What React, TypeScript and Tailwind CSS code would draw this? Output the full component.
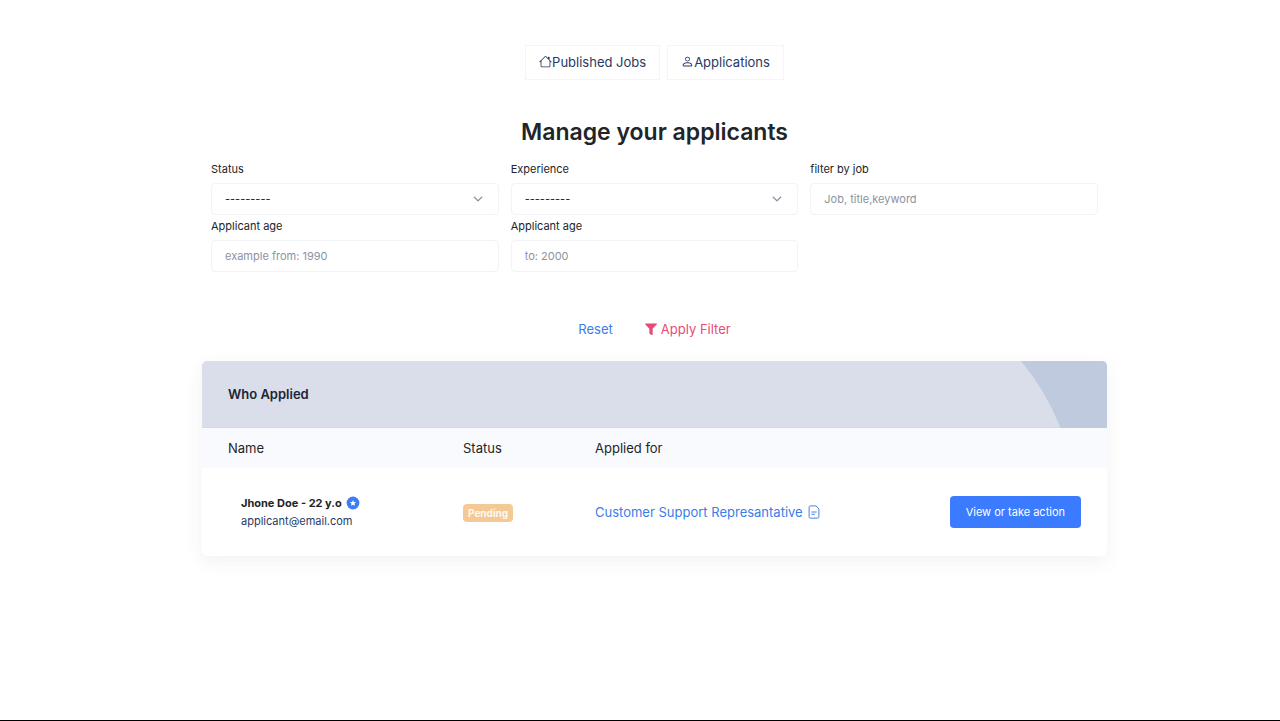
import React from "react";
import { BsHouse, BsPerson, BsChevronDown } from "react-icons/bs";

const control =
  "block h-8 w-full appearance-none rounded-[4px] border border-[#f2f3f5] bg-white px-[13px] text-[11px] leading-4 text-[#212529] outline-none placeholder:text-[#8a93a2]";

function Field({ id, label, children }: { id: string; label: string; children: React.ReactNode }) {
  return (
    <div>
      <label htmlFor={id} className="mb-[5px] block text-[11px] leading-[18px] text-[#212529]">
        {label}
      </label>
      {children}
    </div>
  );
}

function SelectField({ id, label }: { id: string; label: string }) {
  return (
    <Field id={id} label={label}>
      <div className="relative">
        <select id={id} className={control}>
          <option>---------</option>
        </select>
        <BsChevronDown
          className="pointer-events-none absolute top-[11px] right-4 size-2.5 text-[#6f7c90]"
          strokeWidth={1}
        />
      </div>
    </Field>
  );
}

function TabLink({ icon, children }: { icon: React.ReactNode; children: React.ReactNode }) {
  return (
    <a
      href="#"
      className="flex h-[35px] items-center border border-[#f4f5f7] px-[13px] pb-0.5 text-[13px] leading-5 text-[#273a63]"
    >
      {icon}
      {children}
    </a>
  );
}

function FunnelIcon() {
  return (
    <svg viewBox="0 0 512 512" className="size-3" fill="currentColor" aria-hidden="true">
      <path d="M488 16H24C3 16-8 42 7 57l179 184v199c0 8 4 15 10 19l86 50c16 10 44 0 44-20V241L505 57c15-15 4-41-17-41z" />
    </svg>
  );
}

function FileTextIcon() {
  return (
    <svg
      viewBox="0 0 16 16"
      className="size-[14px]"
      fill="none"
      stroke="currentColor"
      strokeWidth="1.1"
      strokeLinecap="round"
      strokeLinejoin="round"
      aria-hidden="true"
    >
      <path d="M9.8 1H4a1.600 1.600 0 0 0-1.600 1.600v10.800A1.600 1.600 0 0 0 4 15h8a1.600 1.600 0 0 0 1.600-1.600V4.800z" />
      <path d="M5.500 8h5M5.500 10.600h3" />
    </svg>
  );
}

function StarBadge() {
  return (
    <svg viewBox="0 0 14 14" className="size-[14px]" role="img" aria-label="Featured">
      <circle cx="7" cy="7" r="6.4" fill="#3b7cf8" />
      <path d="M7 4.1l.9 1.900 2.100.2-1.500 1.400.4 2.100L7 8.700 5.100 9.700l.4-2.100L4 6.200l2.100-.2z" fill="#fff" />
    </svg>
  );
}

export default function App() {
  return (
    <main className="min-h-screen border-b border-black bg-white pt-[45px] pl-[29px] font-['Inter',sans-serif] text-[#212529]">
      <div className="mx-auto max-w-[905px]">
        <nav className="flex justify-center gap-[7px]">
          <TabLink icon={<BsHouse className="size-[13px]" />}>Published Jobs</TabLink>
          <TabLink icon={<BsPerson className="size-[13px]" />}>Applications</TabLink>
        </nav>

        <h1 className="mt-9 text-center text-[23px] leading-8 font-semibold">Manage your applicants</h1>

        <form onSubmit={(e) => e.preventDefault()}>
          <div className="mt-3 grid grid-cols-3 gap-x-3 gap-y-[2px] px-[9px]">
            <SelectField id="status" label="Status" />
            <SelectField id="experience" label="Experience" />
            <Field id="job" label="filter by job">
              <input id="job" type="text" placeholder="Job, title,keyword" className={control} />
            </Field>
            <Field id="age-from" label="Applicant age">
              <input id="age-from" type="text" placeholder="example from: 1990" className={control} />
            </Field>
            <Field id="age-to" label="Applicant age">
              <input id="age-to" type="text" placeholder="to: 2000" className={control} />
            </Field>
          </div>
          <div className="mt-[47px] flex justify-center gap-8 text-[13px] leading-5">
            <button type="reset" className="text-[#3b7de9]">
              Reset
            </button>
            <button type="submit" className="flex items-center gap-1 text-[#e84a77]">
              <FunnelIcon />
              Apply Filter
            </button>
          </div>
        </form>

        <section className="mt-[22px] overflow-hidden rounded-[5px] bg-white shadow-[0_6px_18px_rgba(65,69,88,0.07)]">
          <header className="relative flex h-[67px] items-center border-b border-[#d5d9e6] bg-[#dadeea] px-[26px]">
            <h2 className="text-[13px] leading-5 font-semibold text-[#212433]">Who Applied</h2>
            <svg viewBox="0 0 86 67" className="absolute top-0 right-0 h-[67px] w-[86px]" aria-hidden="true">
              <path d="M0 0Q25 30 39.5 67H86V0z" fill="#bfcadf" />
            </svg>
          </header>
          <table className="w-full table-fixed text-left text-[13px] leading-5">
            <thead className="bg-[#f9fafe]">
              <tr className="h-10">
                <th scope="col" className="w-[261px] pl-[26px] font-normal">Name</th>
                <th scope="col" className="w-[132px] font-normal">Status</th>
                <th scope="col" className="font-normal">Applied for</th>
                <th scope="col" className="w-[160px]" />
              </tr>
            </thead>
            <tbody>
              <tr className="h-[88px]">
                <td className="pl-[39px]">
                  <div className="flex items-center gap-1 text-[11px] leading-[18px] font-bold">
                    Jhone Doe - 22 y.o
                    <StarBadge />
                  </div>
                  <a href="mailto:applicant@email.com" className="block text-[11px] leading-[18px] text-[#273a63]">
                    applicant@email.com
                  </a>
                </td>
                <td>
                  <span className="inline-block rounded-[4px] bg-[#f5c995] px-[5px] text-[10px] leading-[18px] font-bold text-[#fff8ef]">
                    Pending
                  </span>
                </td>
                <td>
                  <a href="#" className="flex items-center gap-1 text-[#3b7de9]">
                    Customer Support Represantative
                    <FileTextIcon />
                  </a>
                </td>
                <td className="pr-[26px] text-right">
                  <button
                    type="button"
                    className="h-8 rounded-[4px] bg-[#3b7bff] px-4 text-[11px] leading-4 whitespace-nowrap text-white"
                  >
                    View or take action
                  </button>
                </td>
              </tr>
            </tbody>
          </table>
        </section>
      </div>
    </main>
  );
}
